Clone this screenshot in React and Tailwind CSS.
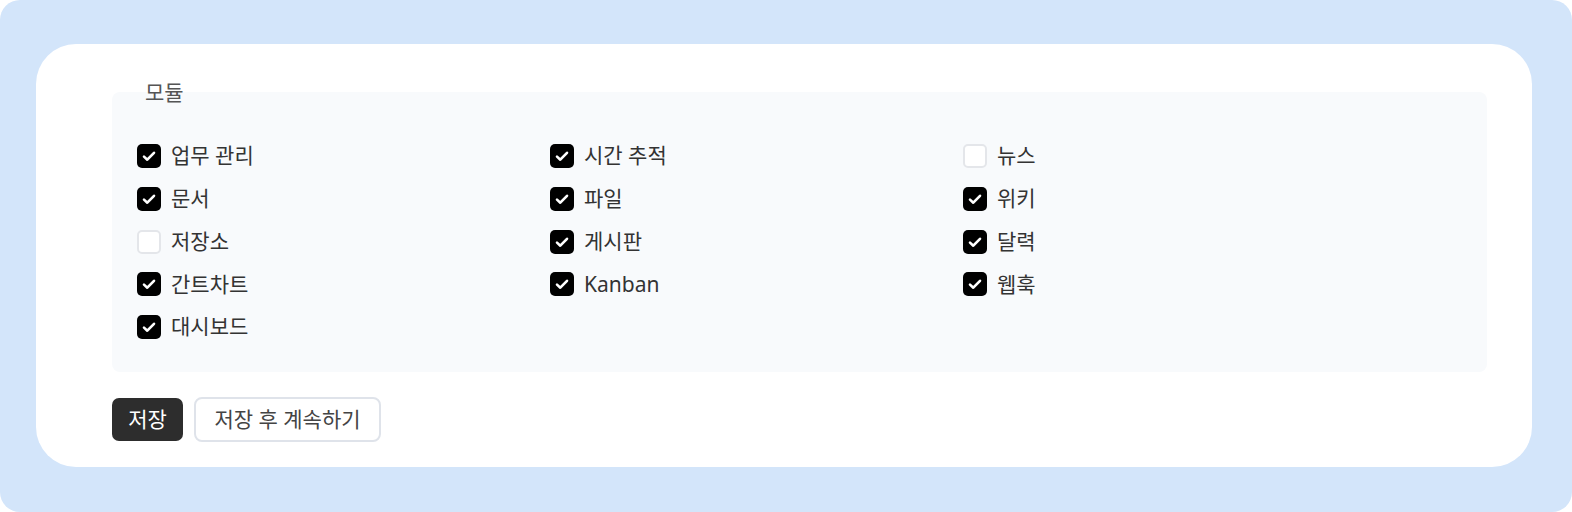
import { useState } from "react";

const MODULES = [
  ["업무 관리", true],
  ["시간 추적", true],
  ["뉴스", false],
  ["문서", true],
  ["파일", true],
  ["위키", true],
  ["저장소", false],
  ["게시판", true],
  ["달력", true],
  ["간트차트", true],
  ["Kanban", true],
  ["웹훅", true],
  ["대시보드", true],
];

const Checkbox = ({ checked, onChange }) => (
  <span
    onClick={onChange}
    className={
      checked
        ? "w-6 h-6 rounded-[5px] bg-black flex items-center justify-center shrink-0 cursor-pointer"
        : "w-6 h-6 rounded-[5px] bg-white border-2 border-[#e4e6ea] shrink-0 cursor-pointer"
    }
  >
    {checked && (
      <svg className="w-4 h-4" viewBox="0 0 16 16" fill="none">
        <path d="M3 8.6l3.3 3.1L13 4.8" stroke="white" strokeWidth="2.6" strokeLinecap="round" strokeLinejoin="round" />
      </svg>
    )}
  </span>
);

const App = () => {
  const [modules, setModules] = useState(MODULES);

  const toggle = (i) => {
    setModules(modules.map((m, j) => (j === i ? [m[0], !m[1]] : m)));
  };

  return (
    <div className="bg-white w-[1572px] h-[512px] font-['Noto_Sans','Noto_Sans_CJK_KR',sans-serif]">
      <div className="bg-[#d3e5fa] rounded-[20px] h-full pt-[44px] pl-[36px] pr-[40px] pb-[45px]">
        <div className="bg-white rounded-[40px] h-full pl-[76px] pr-[45px] pt-[35px]">
          {/* Modules */}
          <fieldset className="bg-[#f8fafc] rounded-lg px-[25px] pt-[39px] pb-[33px] min-w-0">
            <legend className="px-2 text-[21px] leading-[26px] text-[#555]">모듈</legend>
            <div className="grid grid-cols-[413px_413px_413px] gap-y-[18.75px]">
              {modules.map(([label, checked], i) => (
                <label key={label} className="flex items-center gap-[10px] h-6 text-[21px] text-[#333] select-none">
                  <Checkbox checked={checked} onChange={() => toggle(i)} />
                  <span>{label}</span>
                </label>
              ))}
            </div>
          </fieldset>

          {/* Actions */}
          <div className="flex gap-[11px] mt-[26px]">
            <button className="bg-[#2d2d2d] text-white text-[21px] rounded-[7px] w-[71px] h-[43px]">저장</button>
            <button className="bg-white text-[#444] text-[21px] rounded-[8px] border-2 border-[#dfe3ea] w-[187px] h-[45px] -mt-px">
              저장 후 계속하기
            </button>
          </div>
        </div>
      </div>
    </div>
  );
};

export default App;
